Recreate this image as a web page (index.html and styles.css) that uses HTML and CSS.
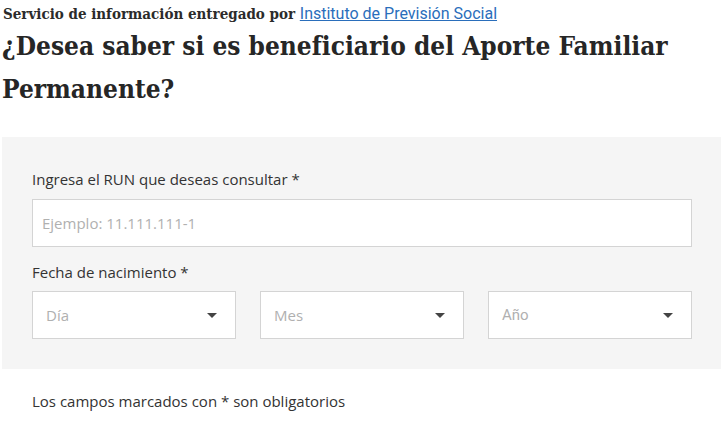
FILE: index.html
```html
<!DOCTYPE html>
<html lang="es">
<head>
<meta charset="utf-8">
<title>Aporte Familiar Permanente</title>
<link rel="stylesheet" href="styles.css">
</head>
<body>
<div class="page">
  <p class="source">Servicio de información entregado por <a href="#" class="source-link">Instituto de Previsión Social</a></p>
  <h1 class="title">¿Desea saber si es beneficiario del Aporte Familiar Permanente?</h1>
  <form class="panel">
    <label class="label" for="run">Ingresa el RUN que deseas consultar *</label>
    <div class="input">
      <span class="placeholder">Ejemplo: 11.111.111-1</span>
    </div>
    <div class="label label-date">Fecha de nacimiento *</div>
    <div class="selects">
      <div class="select"><span class="placeholder">Día</span><span class="caret"></span></div>
      <div class="select"><span class="placeholder">Mes</span><span class="caret"></span></div>
      <div class="select"><span class="placeholder alt">Año</span><span class="caret"></span></div>
    </div>
  </form>
  <p class="note">Los campos marcados con * son obligatorios</p>
</div>
</body>
</html>
```
FILE: styles.css
```css
html, body {
  margin: 0;
  padding: 0;
  background: #fff;
}
.page {
  padding-left: 2px;
  font-family: "Open Sans", "Noto Sans", sans-serif;
  color: #333;
}
.source {
  margin: 0;
  padding-top: 4px;
  padding-left: 1px;
  font-family: "DejaVu Serif", serif;
  font-stretch: condensed;
  font-weight: bold;
  font-size: 15px;
  line-height: 20px;
  color: #2b2b2b;
}
.source-link {
  font-family: Roboto, sans-serif;
  font-stretch: normal;
  font-weight: normal;
  font-size: 16px;
  color: #2a6ebb;
  text-decoration: underline;
}
.title {
  margin: 1px 0 0 0;
  font-family: "DejaVu Serif", serif;
  font-stretch: condensed;
  font-weight: bold;
  font-size: 26px;
  line-height: 43px;
  color: #262626;
}
.panel {
  margin-top: 26px;
  background: #f5f5f5;
  padding: 31px 29px 30px 30px;
  display: flex;
  flex-direction: column;
}
.label {
  font-size: 15px;
  line-height: 22px;
  color: #333;
  margin-bottom: 9px;
}
.label-date {
  margin-top: 14px;
  margin-bottom: 8px;
}
.input {
  height: 46px;
  background: #fff;
  border: 1px solid #d4d4d4;
  display: flex;
  align-items: center;
  padding: 0 9px;
}
.placeholder {
  font-size: 15px;
  color: #b0b0b0;
}
.placeholder.alt {
  font-family: Roboto, sans-serif;
}
.selects {
  display: grid;
  grid-template-columns: repeat(3, 1fr);
  column-gap: 24px;
}
.select {
  height: 46px;
  background: #fff;
  border: 1px solid #d4d4d4;
  display: flex;
  align-items: center;
  justify-content: space-between;
  padding: 0 18px 0 13px;
}
.caret {
  width: 0;
  height: 0;
  border-left: 5px solid transparent;
  border-right: 5px solid transparent;
  border-top: 5px solid #444;
}
.note {
  margin: 21px 0 0 30px;
  font-size: 15px;
  line-height: 22px;
  color: #333;
}
```
